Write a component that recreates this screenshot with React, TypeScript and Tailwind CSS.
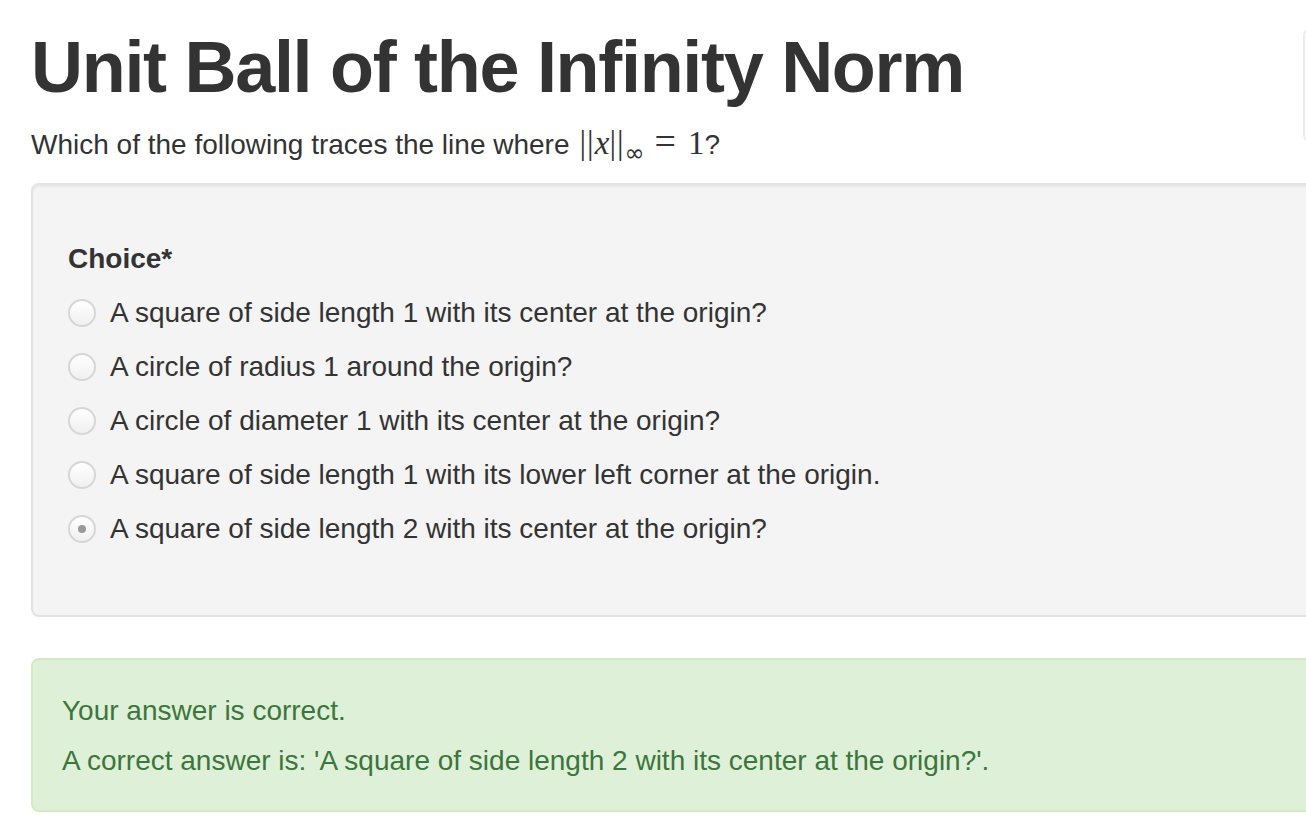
import React from "react";

const options = [
  "A square of side length 1 with its center at the origin?",
  "A circle of radius 1 around the origin?",
  "A circle of diameter 1 with its center at the origin?",
  "A square of side length 1 with its lower left corner at the origin.",
  "A square of side length 2 with its center at the origin?",
];

function Radio({ checked }: { checked?: boolean }) {
  return (
    <span className="flex h-[28px] w-[28px] shrink-0 items-center justify-center rounded-full border-2 border-[#d6d6d6] bg-gradient-to-b from-white to-[#f0f0f0]">
      {checked && <span className="h-[8px] w-[8px] rounded-full bg-[#999]" />}
    </span>
  );
}

const serif = { fontFamily: '"Liberation Serif", "Times New Roman", serif' };

export default function App() {
  return (
    <div className="h-[822px] w-[1306px] overflow-hidden bg-white text-[#333]" style={{ fontFamily: '"Liberation Sans", Arial, sans-serif' }}>
      <div className="w-[1600px] pl-[31px]">
        <div className="flex">
          <div className="w-[1272px]">
            <h1 className="mt-[28px] text-[72px] font-bold leading-[79px] tracking-[-1.3px]">Unit Ball of the Infinity Norm</h1>
            <p className="mt-[15px] h-[40px] text-[28px] leading-[40px]">
              Which of the following traces the line where
              <span style={serif} className="ml-[10px] text-[33px] leading-none">
                <span className="tracking-[1px]">||</span>
                <i>x</i>
                <span className="tracking-[1px]">||</span>
                <span className="relative top-[7px] text-[24px] leading-none" style={{ fontFamily: '"DejaVu Sans", sans-serif' }}>∞</span>
                <span className="ml-[10px] mr-[12px] text-[38px] leading-none">=</span>1
              </span>
              ?
            </p>
          </div>
          <div className="mt-[28px] h-[115px] w-[200px] rounded-[8px] border-2 border-[#ececec]" />
        </div>

        <div className="mt-[21px] h-[434px] w-[1400px] rounded-[8px] border-2 border-[#e3e3e3] bg-[#f4f4f4] pl-[35px] pt-[54px] shadow-[inset_0_2px_2px_rgba(0,0,0,0.05)]">
          <div className="text-[28px] font-bold leading-[40px]">Choice*</div>
          <div className="mt-[7px] flex flex-col">
            {options.map((o, i) => (
              <label key={i} className="flex h-[54px] items-center gap-[14px]">
                <Radio checked={i === 4} />
                <span className="text-[28px] leading-[40px]">{o}</span>
              </label>
            ))}
          </div>
        </div>

        <div className="mt-[41px] h-[154px] w-[1400px] rounded-[8px] border-2 border-[#d6e9c6] bg-[#dff0d8] pl-[29px] pt-[31px] text-[28px] leading-[40px] text-[#3c763d]">
          <p>Your answer is correct.</p>
          <p className="mt-[10px]">A correct answer is: 'A square of side length 2 with its center at the origin?'.</p>
        </div>
      </div>
    </div>
  );
}
